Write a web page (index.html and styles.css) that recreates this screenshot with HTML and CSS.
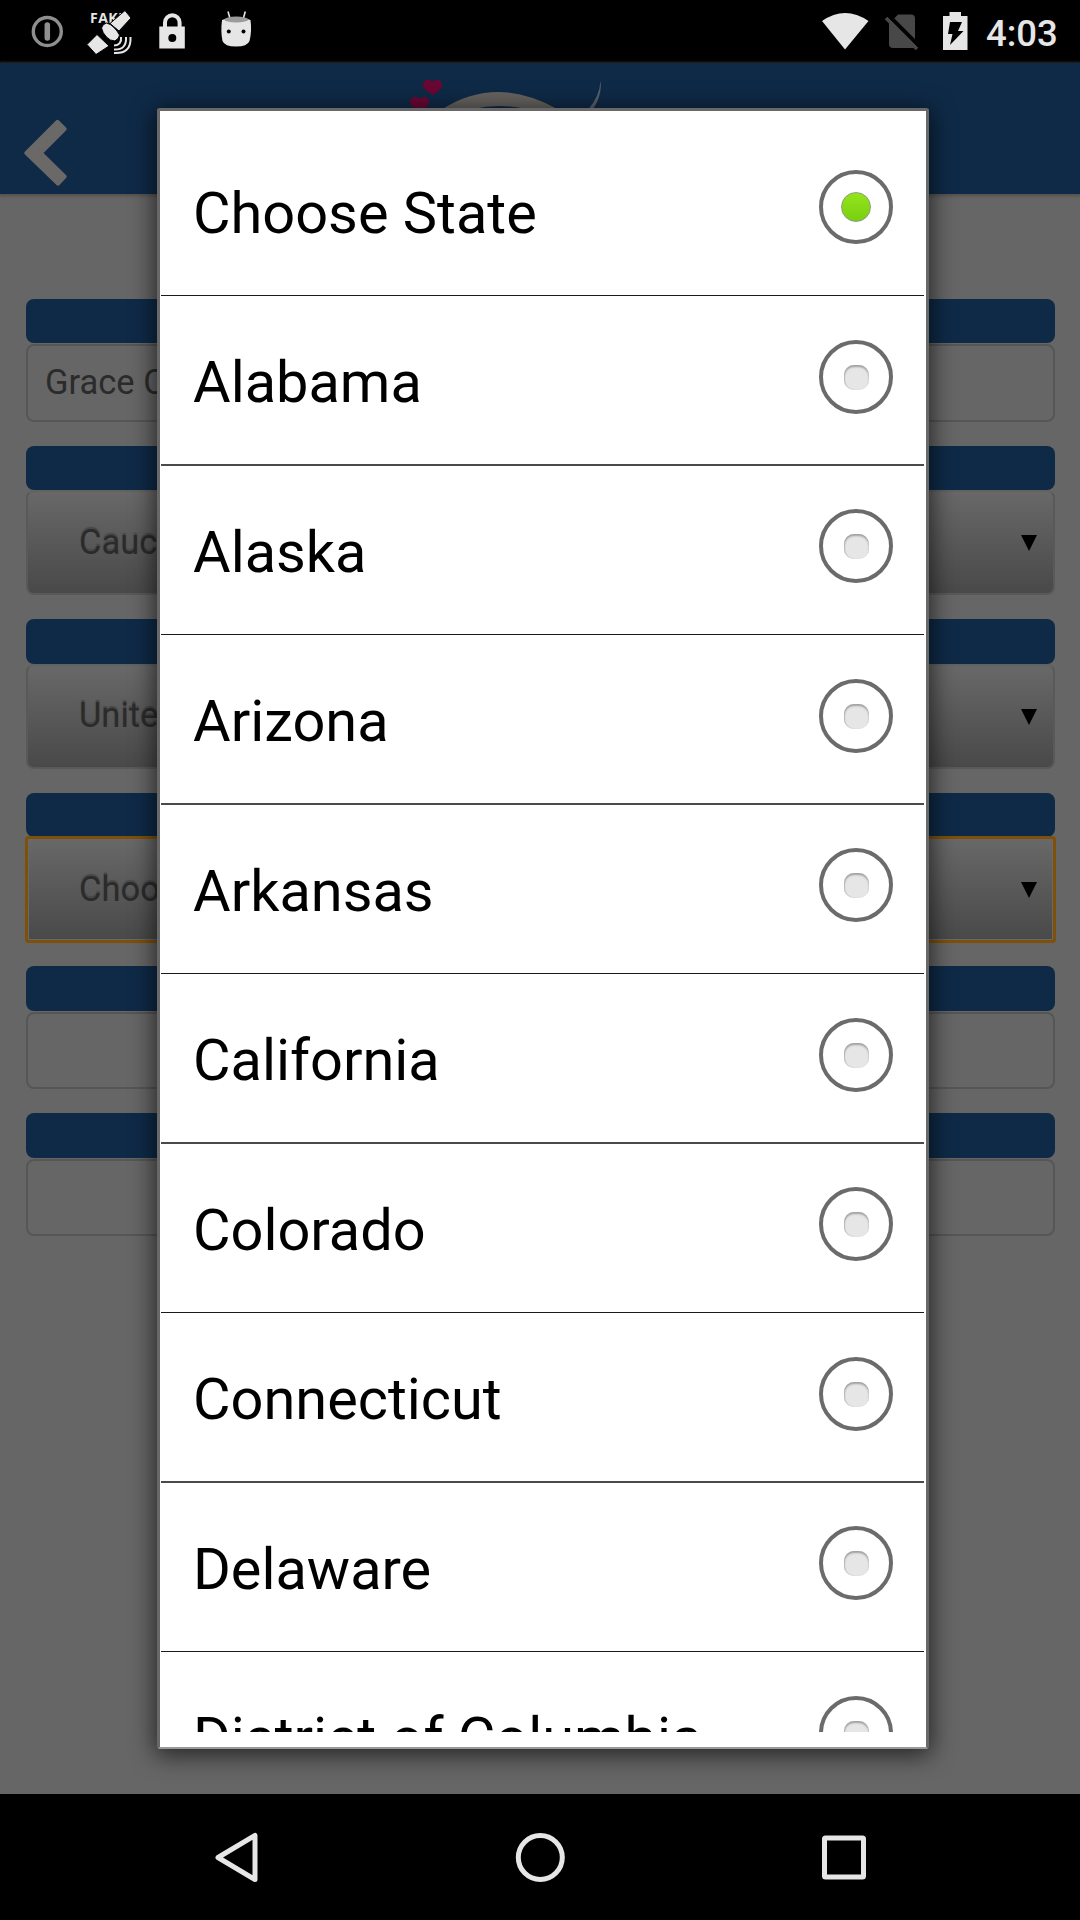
FILE: index.html
```html
<!DOCTYPE html>
<html lang="en">
<head>
<meta charset="utf-8">
<title>Choose State</title>
<link rel="stylesheet" href="styles.css">
</head>
<body>
<div class="screen">
  <header class="status">
    <svg class="status-left" width="300" height="63" viewBox="0 0 300 63">
      <g fill="none" stroke="#8f8f8f"><circle cx="47.3" cy="31.5" r="14" stroke-width="3.4"/><path d="M47.3 25v13" stroke-width="5.500" stroke-linecap="round"/></g>
      <text class="fake" x="90" y="23.300" textLength="36">FAKE</text>
      <g fill="#e6e6e6" stroke="#000" stroke-width="1">
        <path d="M125 10.500l6 7.500L119 31l-9-7.500z"/>
        <path d="M97 34.500l12 11.500-13 8.500-9-10z"/>
        <path d="M101.500 28q1-4 5-5 4 1 7 4 4 4 6 8 0 3-4.500 6-5 0-8.500-4-4-4-5-9z"/>
      </g>
      <g fill="none" stroke="#e6e6e6" stroke-width="2"><path d="M121 37q1 8-7 8.500"/><path d="M126 37q1 13-12 12.500"/><path d="M130.500 37q1 17-16.500 16"/></g>
      <path d="M165 27v-4.500a7.300 7.300 0 0 1 14.600 0V27" fill="none" stroke="#e6e6e6" stroke-width="4"/>
      <rect x="159.300" y="26.500" width="25.500" height="22" fill="#e6e6e6"/><circle cx="172.300" cy="38" r="4" fill="#000"/>
      <path d="M228 11.500l2 7M245.300 11.500l-2 7" stroke="#e6e6e6" stroke-width="1.600"/>
      <path d="M222 20q14-6 28.500 0 1.500 12-1 21-2 5.500-13.500 5.500T222.500 41q-2-9-.5-21z" fill="#e6e6e6"/>
      <ellipse cx="236.300" cy="19.500" rx="12" ry="3" fill="#9b9b9b"/>
      <circle cx="228.800" cy="31.500" r="2" fill="#000"/><circle cx="243.500" cy="31.500" r="2" fill="#000"/>
    </svg>
    <div class="status-right">
      <svg width="160" height="63" viewBox="810 0 160 63">
        <path d="M822 21q23-16 46.500 0L845 49.500z" fill="#e6e6e6"/>
        <path d="M889 24l9-9.500h13q4 0 4 4V48h-22q-4 0-4-4z" fill="#484848"/>
        <path d="M888 15l31 31" stroke="#000" stroke-width="4"/><path d="M886 18l31 31" stroke="#484848" stroke-width="3.500"/>
        <path d="M943 16h6.500v-4h11.500v4h6.500v34H943z" fill="#e6e6e6"/>
        <path d="M950 22h12l-4 9h5.500L950 45l2.500-11H948z" fill="#000"/>
      </svg>
      <span class="clock">4:03</span>
    </div>
  </header>

  <div class="appbar">
    <svg class="back" width="67" height="67" viewBox="0 0 67 67"><path d="M32 1.500q1.500-1.500 3 0l7 7q1.500 1.500 0 3L19.500 34 42 56q1.500 1.500 0 3l-6.500 7q-1.500 1.500-3 0L1 35.500q-1.500-1.500 0-3z" fill="#6b6967"/></svg>
    <svg class="logo" width="220" height="46" viewBox="400 63 220 46">
      <path d="M433 95.500c-4-4-10-6-10-10 0-7 7-6 10-4 3-2 9-3 9 4 0 4-5 6-9 10z" fill="#6a0733"/>
      <path d="M420 112.500c-4-4-10-6-10-10 0-7 7-6 10-4 3-2 9-3 9 4 0 4-5 6-9 10z" fill="#6a0733"/>
      <path d="M441 110q55-36 118 0h-29q-32-8-60 0z" fill="#666360"/>
      <path d="M600.500 81q2 14-8 29h-5q12-13 13-29z" fill="#596168"/>
    </svg>
  </div>

  <main class="form">
    <section class="field"><div class="label"></div><div class="input">Grace Church</div></section>
    <section class="field"><div class="label"></div><div class="select"><span>Caucasian</span><i class="arrow"></i></div></section>
    <section class="field"><div class="label"></div><div class="select"><span>United States</span><i class="arrow"></i></div></section>
    <section class="field"><div class="label"></div><div class="select focused"><span>Choose State</span><i class="arrow"></i></div></section>
    <section class="field"><div class="label"></div><div class="input"></div></section>
    <section class="field"><div class="label"></div><div class="input"></div></section>
  </main>

  <nav class="navbar">
    <svg width="1080" height="126" viewBox="0 1794 1080 126" fill="none" stroke="#e6e6e6" stroke-width="5" stroke-linejoin="round">
      <path d="M255 1835.500v44L218 1857.500z"/>
      <circle cx="540.300" cy="1857.500" r="22"/>
      <rect x="824.500" y="1838" width="39" height="39" rx="1"/>
    </svg>
  </nav>

  <div class="dialog">
    <ul class="options">
      <li class="option"><span>Choose State</span><i class="radio checked"></i></li>
      <li class="option"><span>Alabama</span><i class="radio"></i></li>
      <li class="option"><span>Alaska</span><i class="radio"></i></li>
      <li class="option"><span>Arizona</span><i class="radio"></i></li>
      <li class="option"><span>Arkansas</span><i class="radio"></i></li>
      <li class="option"><span>California</span><i class="radio"></i></li>
      <li class="option"><span>Colorado</span><i class="radio"></i></li>
      <li class="option"><span>Connecticut</span><i class="radio"></i></li>
      <li class="option"><span>Delaware</span><i class="radio"></i></li>
      <li class="option"><span>District of Columbia</span><i class="radio"></i></li>
    </ul>
  </div>
</div>
</body>
</html>
```
FILE: styles.css
```css
* { box-sizing: border-box; }
body { margin: 0; background: #000; font-family: Roboto, "Liberation Sans", sans-serif; }
.screen { position: relative; width: 1080px; height: 1920px; display: flex; flex-direction: column; overflow: hidden; background: #666; }

.status { height: 63px; flex: none; background: #000; display: flex; justify-content: space-between; }
.fake { font: 700 14px "Open Sans", sans-serif; fill: #e6e6e6; }
.status-right { display: flex; width: 270px; }
.status-right svg { flex: none; }
.clock { margin-left: 16px; font-size: 36.500px; font-weight: 500; line-height: 67px; color: #e6e6e6; }

.appbar { height: 131px; flex: none; background: #0f2a47; display: flex; box-shadow: 0 1px 3px 1px #554f4b; }
.back { margin: 56px 0 0 24px; }
.logo { margin-left: 309px; }

.form { flex: 1; padding: 105px 25px 0 26px; display: flex; flex-direction: column; color: #2b2b2b; }
.field { margin-bottom: 24px; white-space: nowrap; }
.label { height: 44.400px; border-radius: 8px; background: #0f2a47; }
.input { height: 77.600px; margin-top: 1px; padding-left: 17px; border: 2px solid #565656; border-radius: 8px; background: #666; font-size: 34.500px; line-height: 72px; }
.select { height: 105px; padding: 0 16px 0 51px; border: 2px solid #595959; border-top-color: #626262; border-radius: 8px; background: linear-gradient(#686868, #494949); display: flex; align-items: center; justify-content: space-between; font-size: 34.500px; text-shadow: 0 -2px 1px #474747; }
.select span { margin-top: -2px; }
.focused { width: 1031px; height: 107px; margin: -1px 0 -1px -1px; border: 3px solid #7e5009; border-radius: 4px; box-shadow: inset 0 0 0 1px #696969; }
.arrow { width: 0; height: 0; border: 8px solid transparent; border-top: 16px solid #000; border-bottom: 0; margin-top: 1px; }

.navbar { height: 126px; flex: none; background: #000; }
.navbar svg { display: block; }

.dialog { position: absolute; left: 157px; top: 108px; width: 772px; height: 1641px; padding: 16px 2px 14px 1px; background: #fff; border: 3px solid #686868; border-bottom: 2px solid #999; border-radius: 3px; box-shadow: 0 4px 24px 2px rgba(0, 0, 0, .65); }
.options { list-style: none; margin: 0; padding: 0; height: 1605px; overflow: hidden; }
.option { height: 169px; padding: 0 31px 0 32px; border-bottom: 1px solid #1a1a1a; display: flex; justify-content: space-between; font-size: 57.700px; line-height: 68px; color: #000; white-space: nowrap; }
.option:nth-child(even) { height: 170px; border-bottom: 2px solid #4a4a4a; }
.option span { padding-top: 52px; }
.radio { flex: none; width: 74px; height: 74px; margin-top: 43px; border: 4px solid #6b6b6b; border-radius: 50%; display: flex; align-items: center; justify-content: center; }
.option:nth-child(even) .radio { margin-top: 44px; }
.radio::before { content: ""; width: 25px; height: 25px; border-radius: 10px; background: #e6e6e6; box-shadow: inset 0 2px 2px #a0a0a0, inset 1px 0 1px #c4c4c4; }
.radio.checked::before { width: 28px; height: 28px; border-radius: 50%; background: linear-gradient(#94e41b, #78d010); border: 1px solid #8d9b80; box-shadow: none; }
```
